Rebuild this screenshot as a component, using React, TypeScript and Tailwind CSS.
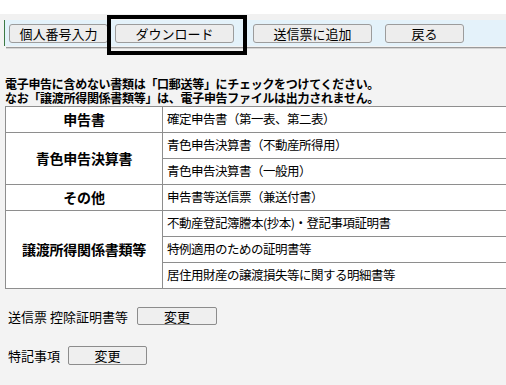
import React from "react";

const font = { fontFamily: '"Noto Sans CJK JP", "Noto Sans", sans-serif' };

function TBtn({ label, w, ml }: { label: string; w: string; ml: string }) {
  return (
    <div
      className={`${w} ${ml} h-[19px] flex items-center justify-center border border-[#9c9c9c] rounded-[3px] bg-[#ededed] text-[13px] leading-none text-black`}
    >
      {label}
    </div>
  );
}

export default function App() {
  const cell = "border border-[#8e8e8e] h-[26px] p-0";
  const head = `${cell} w-[157px] text-center font-bold text-[14px] tracking-[-0.2px]`;
  const data = `${cell} text-left pl-[4px] text-[12.5px] tracking-[-0.5px]`;
  return (
    <div
      className="relative w-[506px] h-[385px] overflow-hidden bg-[#f3f3f3] text-black"
      style={font}
    >
      <div className="h-[14px] bg-white" />
      <div className="h-[6px] bg-[#f1f1f1]" />
      <div className="ml-[4px] h-[26px] border-l border-[#3d7a44] bg-[#e4f2fa] flex items-center">
        <TBtn label="個人番号入力" w="w-[99px]" ml="ml-[4px]" />
        <TBtn label="ダウンロード" w="w-[119px]" ml="ml-[7px]" />
        <TBtn label="送信票に追加" w="w-[119px]" ml="ml-[19px]" />
        <TBtn label="戻る" w="w-[79px]" ml="ml-[13px]" />
      </div>
      <div className="ml-[6px] h-[1px] bg-[#9a9a9a] mt-[1px]" />
      <div className="ml-[6px] h-[1px] bg-[#d4d4d4]" />

      <div className="mt-[28px] ml-[5px] font-bold text-[12px] leading-[14px] tracking-[-0.3px]">
        <div>電子申告に含めない書類は「口郵送等」にチェックをつけてください。</div>
        <div>なお「譲渡所得関係書類等」は、電子申告ファイルは出力されません。</div>
      </div>

      <table className="mt-[1px] ml-[5px] w-[530px] border-collapse bg-white table-fixed">
        <colgroup>
          <col className="w-[157px]" />
          <col />
        </colgroup>
        <tbody>
          <tr>
            <td className={head}>申告書</td>
            <td className={data}>確定申告書（第一表、第二表）</td>
          </tr>
          <tr>
            <td className={head} rowSpan={2}>青色申告決算書</td>
            <td className={data}>青色申告決算書（不動産所得用）</td>
          </tr>
          <tr>
            <td className={data}>青色申告決算書（一般用）</td>
          </tr>
          <tr>
            <td className={head}>その他</td>
            <td className={data}>申告書等送信票（兼送付書）</td>
          </tr>
          <tr>
            <td className={head} rowSpan={3}>譲渡所得関係書類等</td>
            <td className={data}>不動産登記簿謄本(抄本)・登記事項証明書</td>
          </tr>
          <tr>
            <td className={data}>特例適用のための証明書等</td>
          </tr>
          <tr>
            <td className={data}>居住用財産の譲渡損失等に関する明細書等</td>
          </tr>
        </tbody>
      </table>

      <div className="mt-[18px] ml-[8px] flex items-center text-[13px] leading-none">
        <span>送信票 控除証明書等</span>
        <div className="ml-[9px] w-[80px] h-[18px] flex items-center justify-center border border-[#8c8c8c] rounded-[2px] bg-[#efefef]">
          変更
        </div>
      </div>
      <div className="mt-[21px] ml-[8px] flex items-center text-[13px] leading-none">
        <span>特記事項</span>
        <div className="ml-[8px] w-[79px] h-[19px] flex items-center justify-center border border-[#8c8c8c] rounded-[2px] bg-[#efefef]">
          変更
        </div>
      </div>

      <div className="absolute left-[107px] top-[15px] w-[140px] h-[40px] border-[4px] border-black" />
    </div>
  );
}
